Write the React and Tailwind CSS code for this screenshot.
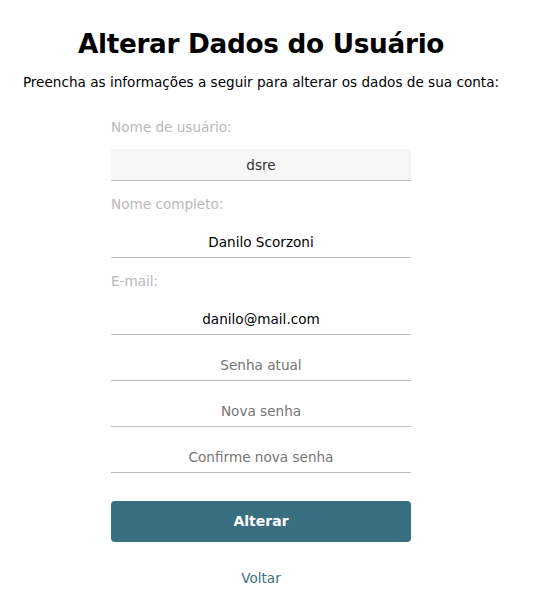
export default function App() {
  const font = { fontFamily: '"DejaVu Sans", Verdana, sans-serif' };
  return (
    <div className="min-h-[606px] bg-white flex flex-col items-center text-black pr-[12px]" style={font}>
      <h1 className="mt-[27px] text-[26.3px] leading-[34px] font-bold tracking-[-0.3px]">Alterar Dados do Usuário</h1>
      <p className="mt-[12px] text-[13.6px] leading-[18px]">
        Preencha as informações a seguir para alterar os dados de sua conta:
      </p>
      <form className="w-[300px] mt-[27px] flex flex-col text-[13.6px]">
        <label className="text-[#b9b9b9] leading-[18px]">Nome de usuário:</label>
        <input
          disabled
          value="dsre"
          readOnly
          className="mt-[13px] h-[32px] bg-[#f6f6f6] border-b border-[#bdbdbd] text-center text-[#333] outline-none"
        />
        <label className="mt-[14px] text-[#b9b9b9] leading-[18px]">Nome completo:</label>
        <input
          value="Danilo Scorzoni"
          readOnly
          className="mt-[13px] h-[32px] border-b border-[#bdbdbd] text-center text-black outline-none"
        />
        <label className="mt-[14px] text-[#b9b9b9] leading-[18px]">E-mail:</label>
        <input
          value="danilo@mail.com"
          readOnly
          className="mt-[13px] h-[32px] border-b border-[#bdbdbd] text-center text-black outline-none"
        />
        <input
          type="password"
          placeholder="Senha atual"
          className="mt-[14px] h-[32px] border-b border-[#bdbdbd] text-center placeholder-[#757575] outline-none"
        />
        <input
          type="password"
          placeholder="Nova senha"
          className="mt-[14px] h-[32px] border-b border-[#bdbdbd] text-center placeholder-[#757575] outline-none"
        />
        <input
          type="password"
          placeholder="Confirme nova senha"
          className="mt-[14px] h-[32px] border-b border-[#bdbdbd] text-center placeholder-[#757575] outline-none"
        />
        <button
          type="button"
          className="mt-[28px] h-[41px] rounded-[4px] bg-[#3a6f81] text-white text-[14px] font-bold"
        >
          Alterar
        </button>
        <a className="mt-[26px] text-center text-[13.6px] text-[#3a6f81]">Voltar</a>
      </form>
    </div>
  );
}
